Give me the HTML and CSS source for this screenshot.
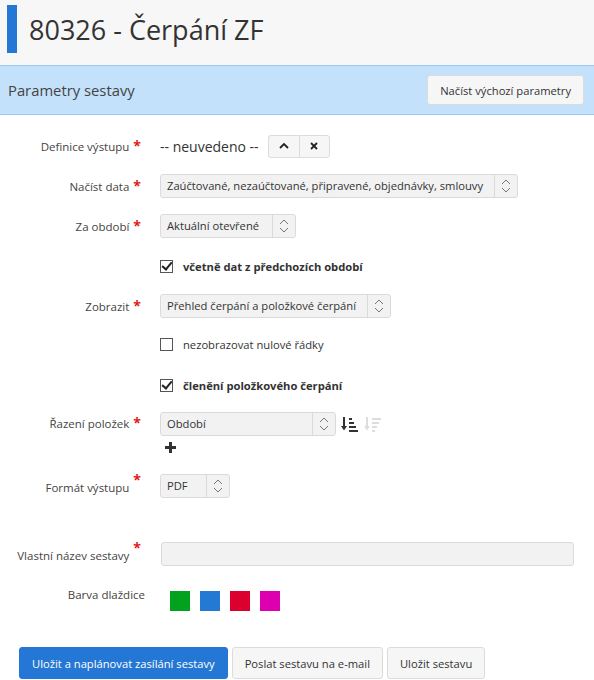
FILE: index.html
```html
<!DOCTYPE html>
<html lang="cs">
<head>
    <meta charset="UTF-8">
    <title>80326 - Čerpání ZF</title>
    <link rel="stylesheet" href="styles.css">
</head>
<body>
    <div class="page-header">
        <span class="header-mark"></span>
        <h1>80326 - Čerpání ZF</h1>
    </div>

    <div class="panel-heading">
        <span class="panel-title">Parametry sestavy</span>
        <button class="btn">Načíst výchozí parametry</button>
    </div>

    <form class="params">
        <div class="row">
            <label class="lbl">Definice výstupu<span class="req">*</span></label>
            <div class="ctrl">
                <span class="plain">-- neuvedeno --</span>
                <span class="btn-group">
                    <button type="button" class="btn-ico">
                        <svg width="12" height="12" viewBox="0 0 12 12"><path d="M2 8 L6 4 L10 8" fill="none" stroke="#222" stroke-width="1.8"/></svg>
                    </button>
                    <button type="button" class="btn-ico">
                        <svg width="12" height="12" viewBox="0 0 12 12"><path d="M3 3 L9 9 M9 3 L3 9" fill="none" stroke="#222" stroke-width="1.8"/></svg>
                    </button>
                </span>
            </div>
        </div>

        <div class="row">
            <label class="lbl">Načíst data<span class="req">*</span></label>
            <div class="ctrl">
                <span class="select w-data">Zaúčtované, nezaúčtované, připravené, objednávky, smlouvy<span class="arrows"></span></span>
            </div>
        </div>

        <div class="row">
            <label class="lbl">Za období<span class="req">*</span></label>
            <div class="ctrl">
                <span class="select w-obdobi">Aktuální otevřené<span class="arrows"></span></span>
            </div>
        </div>

        <div class="row">
            <span class="lbl"></span>
            <label class="ctrl check bold"><span class="box checked"></span>včetně dat z předchozích období</label>
        </div>

        <div class="row">
            <label class="lbl">Zobrazit<span class="req">*</span></label>
            <div class="ctrl">
                <span class="select w-zobrazit">Přehled čerpání a položkové čerpání<span class="arrows"></span></span>
            </div>
        </div>

        <div class="row row-short">
            <span class="lbl"></span>
            <label class="ctrl check"><span class="box"></span>nezobrazovat nulové řádky</label>
        </div>

        <div class="row row-short2">
            <span class="lbl"></span>
            <label class="ctrl check bold"><span class="box checked"></span>členění položkového čerpání</label>
        </div>

        <div class="row row-sort">
            <label class="lbl">Řazení položek<span class="req">*</span></label>
            <div class="ctrl stack">
                <div class="sort-line">
                    <span class="select w-razeni">Období<span class="arrows"></span></span>
                    <svg class="sort-ico" width="18" height="16" viewBox="0 0 18 16">
                        <path d="M3 1 V13" stroke="#333" stroke-width="2"/>
                        <path d="M0 10 L3 14.5 L6 10 Z" fill="#333"/>
                        <path d="M8 3 H11 M8 7 H13 M8 11 H15 M8 15 H17" stroke="#333" stroke-width="1.8"/>
                    </svg>
                    <svg class="sort-ico" width="18" height="16" viewBox="0 0 18 16">
                        <path d="M3 1 V13" stroke="#ddd" stroke-width="2"/>
                        <path d="M0 10 L3 14.5 L6 10 Z" fill="#ddd"/>
                        <path d="M8 3 H17 M8 7 H15 M8 11 H13 M8 15 H11" stroke="#ddd" stroke-width="1.8"/>
                    </svg>
                </div>
                <svg class="plus" width="11" height="11" viewBox="0 0 11 11"><path d="M5.5 0 V11 M0 5.5 H11" stroke="#333" stroke-width="3"/></svg>
            </div>
        </div>

        <div class="row row-format">
            <label class="lbl lbl-low">Formát výstupu<span class="req req-up">*</span></label>
            <div class="ctrl">
                <span class="select w-format">PDF<span class="arrows"></span></span>
            </div>
        </div>

        <div class="row row-name">
            <label class="lbl lbl-low">Vlastní název sestavy<span class="req req-up">*</span></label>
            <div class="ctrl">
                <span class="input"></span>
            </div>
        </div>

        <div class="row row-colors">
            <label class="lbl lbl-top">Barva dlaždice</label>
            <div class="ctrl swatches">
                <span class="swatch green"></span>
                <span class="swatch blue"></span>
                <span class="swatch red"></span>
                <span class="swatch pink"></span>
            </div>
        </div>

        <div class="actions">
            <button type="button" class="btn btn-primary">Uložit a naplánovat zasílání sestavy</button>
            <button type="button" class="btn">Poslat sestavu na e-mail</button>
            <button type="button" class="btn">Uložit sestavu</button>
        </div>
    </form>
</body>
</html>
```

FILE: styles.css
```css
body {
    margin: 0;
    font-family: "Open Sans", "Noto Sans", sans-serif;
    font-size: 11.2px;
    color: #333;
    background-color: #fff;
}
.page-header {
    display: flex;
    align-items: center;
    height: 65px;
    background-color: #f7f7f7;
}
.header-mark {
    width: 10px;
    height: 48px;
    margin: 0 12px 7px 7px;
    background-color: #2477d4;
}
h1 {
    margin: 0 0 7px 0;
    font-size: 27px;
    font-weight: normal;
    color: #333;
}
.panel-heading {
    display: flex;
    align-items: center;
    justify-content: space-between;
    height: 48px;
    padding: 0 10px 0 8px;
    background-color: #c4e1fb;
    border-top: 1px solid #9dc8f2;
    border-bottom: 1px solid #9dc8f2;
}
.panel-title {
    font-size: 14.8px;
    color: #444;
}
.btn {
    height: 30px;
    padding: 0 12px;
    font-family: inherit;
    font-size: 11.2px;
    color: #333;
    background-color: #f6f6f6;
    border: 1px solid #dcdcdc;
    border-radius: 3px;
}
.params {
    padding-top: 19px;
}
.row {
    display: flex;
    align-items: center;
    min-height: 24px;
    margin-bottom: 16px;
}
.lbl {
    width: 145px;
    padding-right: 15px;
    text-align: right;
    font-size: 11.5px;
    color: #444;
}
.req {
    margin: 0 4px 0 4px;
    color: #e21818;
    font-weight: bold;
    font-size: 14px;
    line-height: 1;
}
.req-up {
    position: relative;
    top: -7px;
}
.lbl-low {
    padding-top: 3px;
}
.ctrl {
    display: flex;
    align-items: center;
}
.plain {
    font-size: 14px;
    color: #333;
    margin-right: 9px;
}
.btn-group {
    display: inline-flex;
}
.btn-ico {
    display: flex;
    align-items: center;
    justify-content: center;
    width: 31px;
    height: 23px;
    padding: 0;
    background-color: #f6f6f6;
    border: 1px solid #dcdcdc;
}
.btn-ico:first-child {
    border-radius: 3px 0 0 3px;
    border-right: none;
}
.btn-ico:last-child {
    border-radius: 0 3px 3px 0;
}
.select {
    position: relative;
    display: inline-block;
    box-sizing: border-box;
    height: 24px;
    line-height: 22px;
    padding: 0 30px 0 6px;
    background-color: #f2f2f2;
    border: 1px solid #dadada;
    border-radius: 3px;
    color: #333;
    white-space: nowrap;
}
.arrows {
    position: absolute;
    top: 0;
    right: 0;
    bottom: 0;
    width: 22px;
    border-left: 1px solid #dadada;
    background: url("data:image/svg+xml;utf8,<svg xmlns='http://www.w3.org/2000/svg' width='10' height='14'><path d='M1 5 L5 1 L9 5 M1 9 L5 13 L9 9' fill='none' stroke='%23777' stroke-width='1'/></svg>") center no-repeat;
}
.w-data { width: 358px; }
.w-obdobi { width: 136px; }
.w-zobrazit { width: 231px; }
.w-razeni { width: 176px; }
.w-format { width: 70px; }
.check {
    height: 24px;
}
.bold {
    font-weight: bold;
}
.box {
    position: relative;
    box-sizing: border-box;
    width: 13px;
    height: 13px;
    margin-right: 10px;
    border: 1px solid #555;
    background-color: #fff;
}
.box.checked::after {
    content: "";
    position: absolute;
    left: 3px;
    top: -1px;
    width: 4px;
    height: 8px;
    border: solid #222;
    border-width: 0 2px 2px 0;
    transform: rotate(40deg);
}
.row-short {
    min-height: 20px;
    margin-bottom: 19px;
}
.row-short .check {
    height: 20px;
}
.row-short2 {
    margin-bottom: 15px;
}
.row-sort {
    align-items: flex-start;
    margin-bottom: 21px;
}
.row-sort .lbl {
    line-height: 24px;
}
.stack {
    flex-direction: column;
    align-items: flex-start;
}
.sort-line {
    display: flex;
    align-items: center;
}
.sort-ico {
    margin-left: 5px;
}
.plus {
    margin: 6px 0 0 5px;
}
.row-format {
    margin-bottom: 44px;
}
.row-name {
    margin-bottom: 25px;
}
.input {
    display: block;
    box-sizing: border-box;
    width: 413px;
    height: 24px;
    background-color: #f2f2f2;
    border: 1px solid #dadada;
    border-radius: 3px;
}
.row-name .ctrl {
    margin-left: 1px;
}
.row-colors {
    align-items: flex-start;
    min-height: 20px;
    height: 20px;
    margin-bottom: 36px;
}
.lbl-top {
    line-height: 14px;
    margin-top: -3px;
}
.swatches {
    gap: 10px;
    margin-left: 10px;
}
.swatch {
    width: 20px;
    height: 20px;
}
.green { background-color: #02a21f; }
.blue { background-color: #2479d3; }
.red { background-color: #dc002f; }
.pink { background-color: #dc00af; }
.actions {
    display: flex;
    gap: 4px;
    padding-left: 19px;
}
.actions .btn {
    height: 32px;
}
.btn-primary {
    color: #fff;
    background-color: #2477d4;
    border-color: #2477d4;
}
```
